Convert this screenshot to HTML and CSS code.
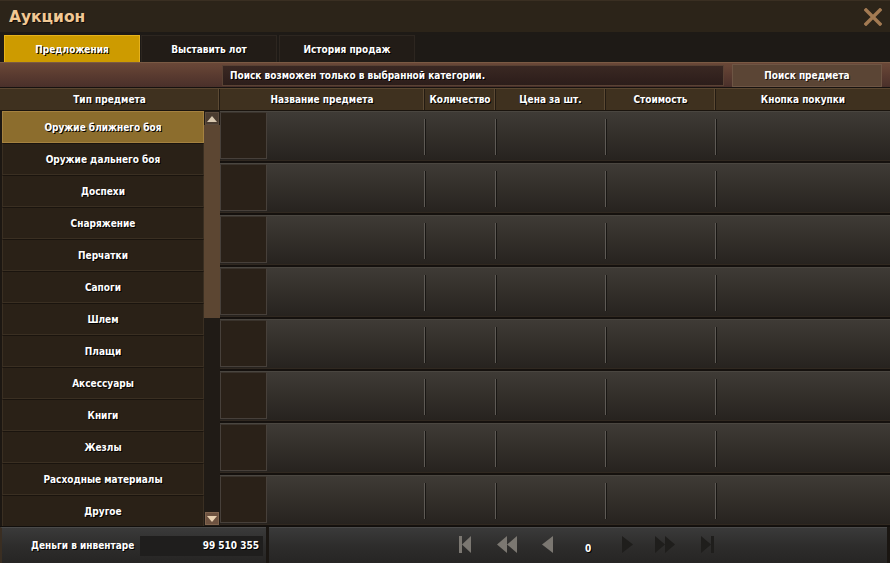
FILE: index.html
```html
<!DOCTYPE html>
<html lang="ru">
<head>
<meta charset="utf-8">
<title>Аукцион</title>
<link rel="stylesheet" href="styles.css">
</head>
<body>
<div class="window">
  <div class="titlebar">
    <span class="title">Аукцион</span>
    <svg class="close" width="18" height="18" viewBox="0 0 18 18"><path d="M2 2 L16 16 M16 2 L2 16" stroke="#a37a52" stroke-width="3.4" stroke-linecap="square"/></svg>
  </div>
  <div class="tabs">
    <div class="tab active">Предложения</div>
    <div class="tab">Выставить лот</div>
    <div class="tab">История продаж</div>
  </div>
  <div class="searchrow">
    <div class="searchbox">Поиск возможен только в выбранной категории.</div>
    <div class="searchbtn">Поиск предмета</div>
  </div>
  <div class="headrow">
    <div class="hcell h-type">Тип предмета</div>
    <div class="hcell h-name">Название предмета</div>
    <div class="hcell h-qty">Количество</div>
    <div class="hcell h-price">Цена за шт.</div>
    <div class="hcell h-cost">Стоимость</div>
    <div class="hcell h-buy">Кнопка покупки</div>
  </div>
  <div class="main">
    <div class="cats">
      <div class="cat selected">Оружие ближнего боя</div>
      <div class="cat">Оружие дальнего боя</div>
      <div class="cat">Доспехи</div>
      <div class="cat">Снаряжение</div>
      <div class="cat">Перчатки</div>
      <div class="cat">Сапоги</div>
      <div class="cat">Шлем</div>
      <div class="cat">Плащи</div>
      <div class="cat">Аксессуары</div>
      <div class="cat">Книги</div>
      <div class="cat">Жезлы</div>
      <div class="cat">Расходные материалы</div>
      <div class="cat">Другое</div>
    </div>
    <div class="scroll">
      <div class="sbtn up"><svg width="10" height="6" viewBox="0 0 10 6"><path d="M5 0 L10 6 L0 6 Z" fill="#d8c8b0"/></svg></div>
      <div class="thumb"></div>
      <div class="track"></div>
      <div class="sbtn down"><svg width="10" height="6" viewBox="0 0 10 6"><path d="M0 0 L10 0 L5 6 Z" fill="#e8d0b0"/></svg></div>
    </div>
    <div class="rows">
      <div class="row"><div class="slot"></div><div class="c c-name"></div><div class="c c-qty"></div><div class="c c-price"></div><div class="c c-cost"></div><div class="c c-buy"></div></div>
      <div class="row"><div class="slot"></div><div class="c c-name"></div><div class="c c-qty"></div><div class="c c-price"></div><div class="c c-cost"></div><div class="c c-buy"></div></div>
      <div class="row"><div class="slot"></div><div class="c c-name"></div><div class="c c-qty"></div><div class="c c-price"></div><div class="c c-cost"></div><div class="c c-buy"></div></div>
      <div class="row"><div class="slot"></div><div class="c c-name"></div><div class="c c-qty"></div><div class="c c-price"></div><div class="c c-cost"></div><div class="c c-buy"></div></div>
      <div class="row"><div class="slot"></div><div class="c c-name"></div><div class="c c-qty"></div><div class="c c-price"></div><div class="c c-cost"></div><div class="c c-buy"></div></div>
      <div class="row"><div class="slot"></div><div class="c c-name"></div><div class="c c-qty"></div><div class="c c-price"></div><div class="c c-cost"></div><div class="c c-buy"></div></div>
      <div class="row"><div class="slot"></div><div class="c c-name"></div><div class="c c-qty"></div><div class="c c-price"></div><div class="c c-cost"></div><div class="c c-buy"></div></div>
      <div class="row last"><div class="slot"></div><div class="c c-name"></div><div class="c c-qty"></div><div class="c c-price"></div><div class="c c-cost"></div><div class="c c-buy"></div></div>
    </div>
  </div>
  <div class="bottom">
    <div class="money">
      <span class="money-label">Деньги в инвентаре</span>
      <span class="money-value">99 510 355</span>
    </div>
    <div class="pager">
      <svg class="pg pg-first" width="12" height="17" viewBox="0 0 12 17"><rect x="0" y="0" width="3" height="17" fill="#7b7771"/><path d="M12 0 L12 17 L3 8.5 Z" fill="#7b7771"/></svg>
      <svg class="pg pg-rw" width="20" height="17" viewBox="0 0 20 17"><path d="M10 0 L10 17 L0 8.5 Z M20 0 L20 17 L10 8.5 Z" fill="#7b7771"/></svg>
      <svg class="pg pg-prev" width="12" height="17" viewBox="0 0 12 17"><path d="M12 0 L12 17 L1 8.5 Z" fill="#7b7771"/></svg>
      <span class="pg-num">0</span>
      <svg class="pg pg-next" width="12" height="17" viewBox="0 0 12 17"><path d="M0 0 L0 17 L11 8.5 Z" fill="#1f1e1c"/></svg>
      <svg class="pg pg-ff" width="20" height="17" viewBox="0 0 20 17"><path d="M0 0 L0 17 L10 8.5 Z M10 0 L10 17 L20 8.5 Z" fill="#1f1e1c"/></svg>
      <svg class="pg pg-last" width="13" height="17" viewBox="0 0 13 17"><path d="M0 0 L0 17 L10 8.5 Z" fill="#1f1e1c"/><rect x="10" y="0" width="3" height="17" fill="#1f1e1c"/></svg>
    </div>
  </div>
</div>
</body>
</html>
```

FILE: styles.css
```css
* { box-sizing: border-box; }
html, body { margin: 0; padding: 0; background: #1c1712; }
body { font-family: "DejaVu Sans Condensed", "DejaVu Sans", "Liberation Sans", sans-serif; }

.window {
  width: 890px;
  height: 563px;
  display: flex;
  flex-direction: column;
  background: #1c1712;
  overflow: hidden;
  color: #ffffff;
  font-weight: bold;
  font-size: 10px;
  white-space: nowrap;
}

.titlebar {
  height: 32px;
  flex: none;
  display: flex;
  align-items: center;
  justify-content: space-between;
  padding: 0 8px 0 9px;
  background: #2c2419;
  border-top: 1px solid #3a2f22;
}
.title {
  font-family: "DejaVu Sans", "Liberation Sans", sans-serif;
  font-size: 15.5px;
  font-weight: bold;
  color: #f2c894;
  text-shadow: 1px 1px 0 #120e0a;
}
.close { display: block; margin-top: 1px; }

.tabs {
  height: 30px;
  flex: none;
  display: flex;
  gap: 1px;
  padding: 3px 0 0 4px;
  background: #1e1a16;
}
.tab {
  height: 27px;
  width: 136px;
  display: flex;
  align-items: center;
  justify-content: center;
  background: #221c17;
  border: 1px solid #2d2620;
  border-bottom: none;
  text-shadow: 1px 1px 0 #000;
}
.tab:nth-child(3) { margin-left: 1px; }
.tab.active {
  background: #cd9b00;
  border: 1px solid #e6b21c;
  border-bottom: none;
}

.searchrow {
  height: 26px;
  flex: none;
  display: flex;
  align-items: center;
  padding: 0 8px 0 222px;
  gap: 8px;
  background: linear-gradient(180deg, #6a4838 0%, #5a3b30 50%, #4a302a 100%);
  border-top: 1px solid #7a5a44;
  border-bottom: 1px solid #161210;
}
.searchbox {
  width: 502px;
  height: 21px;
  display: flex;
  align-items: center;
  padding-left: 7px;
  background: linear-gradient(180deg, #3a2823, #2c1d1a);
  border: 1px solid #5a4234;
  text-shadow: 1px 1px 0 #000;
}
.searchbtn {
  width: 150px;
  height: 23px;
  display: flex;
  align-items: center;
  justify-content: center;
  background: #5b4535;
  border: 1px solid #6e5544;
  text-shadow: 1px 1px 0 #1a120c;
}

.headrow {
  height: 23px;
  flex: none;
  display: flex;
  background: #3f311f;
  border-top: 1px solid #5a4630;
  border-bottom: 1px solid #1a140e;
}
.hcell {
  display: flex;
  align-items: center;
  justify-content: center;
  text-shadow: 1px 1px 0 #000;
  border-right: 1px solid #231b12;
  box-shadow: inset -1px 0 0 #5c4a34;
}
.h-type { width: 220px; }
.h-name { width: 205px; }
.h-qty { width: 71px; }
.h-price { width: 110px; }
.h-cost { width: 110px; }
.h-buy { flex: 1; border-right: none; box-shadow: none; }

.main {
  height: 415px;
  flex: none;
  display: flex;
  background: #1c1712;
}
.cats {
  width: 204px;
  padding-left: 2px;
  display: flex;
  flex-direction: column;
  background: #1c1712;
}
.cat {
  height: 32px;
  flex: none;
  display: flex;
  align-items: center;
  justify-content: center;
  background: #2a2117;
  border: 1px solid #3a2f22;
  border-top-color: #1a140e;
  text-shadow: 1px 1px 0 #000;
}
.cat.selected {
  background: #8c6d2d;
  border: 1px solid #a58240;
}

.scroll {
  width: 16px;
  display: flex;
  flex-direction: column;
  background: #201b16;
  padding: 1px;
}
.sbtn {
  height: 13px;
  flex: none;
  display: flex;
  align-items: center;
  justify-content: center;
}
.sbtn.up { background: #4a3c30; border: 1px solid #5a4a3c; }
.sbtn.down { background: #6d5240; border: 1px solid #80644e; }
.thumb {
  height: 193px;
  flex: none;
  margin: 0 -1px;
  background: #5c4632;
}
.track { flex: 1; }

.rows {
  flex: 1;
  display: flex;
  flex-direction: column;
  background: #15110e;
}
.row {
  height: 50px;
  flex: none;
  margin-bottom: 2px;
  display: flex;
  align-items: stretch;
  background: linear-gradient(180deg, #3f3b36 0%, #34302b 45%, #27231f 100%);
  border-top: 1px solid #4a4640;
  border-bottom: 1px solid #302820;
}
.row.last { margin-bottom: 0; }
.slot {
  width: 47px;
  flex: none;
  margin: 0 0 1px 0;
  background: #2a2118;
  border: 1px solid #47403a;
  border-top-color: #3a332c;
}
.c { position: relative; }
.c-name { width: 158px; }
.c-qty { width: 71px; }
.c-price { width: 110px; }
.c-cost { width: 110px; }
.c-buy { flex: 1; }
.c-qty::before, .c-price::before, .c-cost::before, .c-buy::before {
  content: "";
  position: absolute;
  left: -1px;
  top: 7px;
  height: 36px;
  width: 1px;
  background: #5e5a55;
}
.c-qty::after, .c-price::after, .c-cost::after, .c-buy::after {
  content: "";
  position: absolute;
  left: 0;
  top: 7px;
  height: 36px;
  width: 1px;
  background: #191714;
}

.bottom {
  height: 37px;
  flex: none;
  display: flex;
  gap: 3px;
  background: #1a1612;
  border-top: 1px solid #120f0c;
  padding-right: 3px;
}
.money {
  width: 266px;
  display: flex;
  align-items: center;
  padding-left: 29px;
  background: linear-gradient(180deg, #3a3a3a 0%, #2e2d2c 50%, #262524 100%);
  border-top: 1px solid #4a4a4a;
  border-left: 2px solid #3a2e22;
}
.money-label {
  width: 109px;
  flex: none;
  text-shadow: 1px 1px 0 #000;
}
.money-value {
  width: 123px;
  flex: none;
  height: 20px;
  display: flex;
  align-items: center;
  justify-content: flex-end;
  padding-right: 4px;
  background: #1f1e1d;
  text-shadow: 1px 1px 0 #000;
}
.pager {
  flex: 1;
  display: flex;
  align-items: center;
  padding-left: 190px;
  background: linear-gradient(180deg, #3a3a3a 0%, #2e2d2c 50%, #262524 100%);
  border-top: 1px solid #4a4a4a;
}
.pg { display: block; flex: none; margin-top: -2px; }
.pg-rw { margin-left: 26px; }
.pg-prev { margin-left: 24px; }
.pg-num { margin-left: 32px; width: 7px; text-shadow: 1px 1px 0 #000; margin-top: 5px; }
.pg-next { margin-left: 30px; }
.pg-ff { margin-left: 21px; }
.pg-last { margin-left: 26px; }
```
